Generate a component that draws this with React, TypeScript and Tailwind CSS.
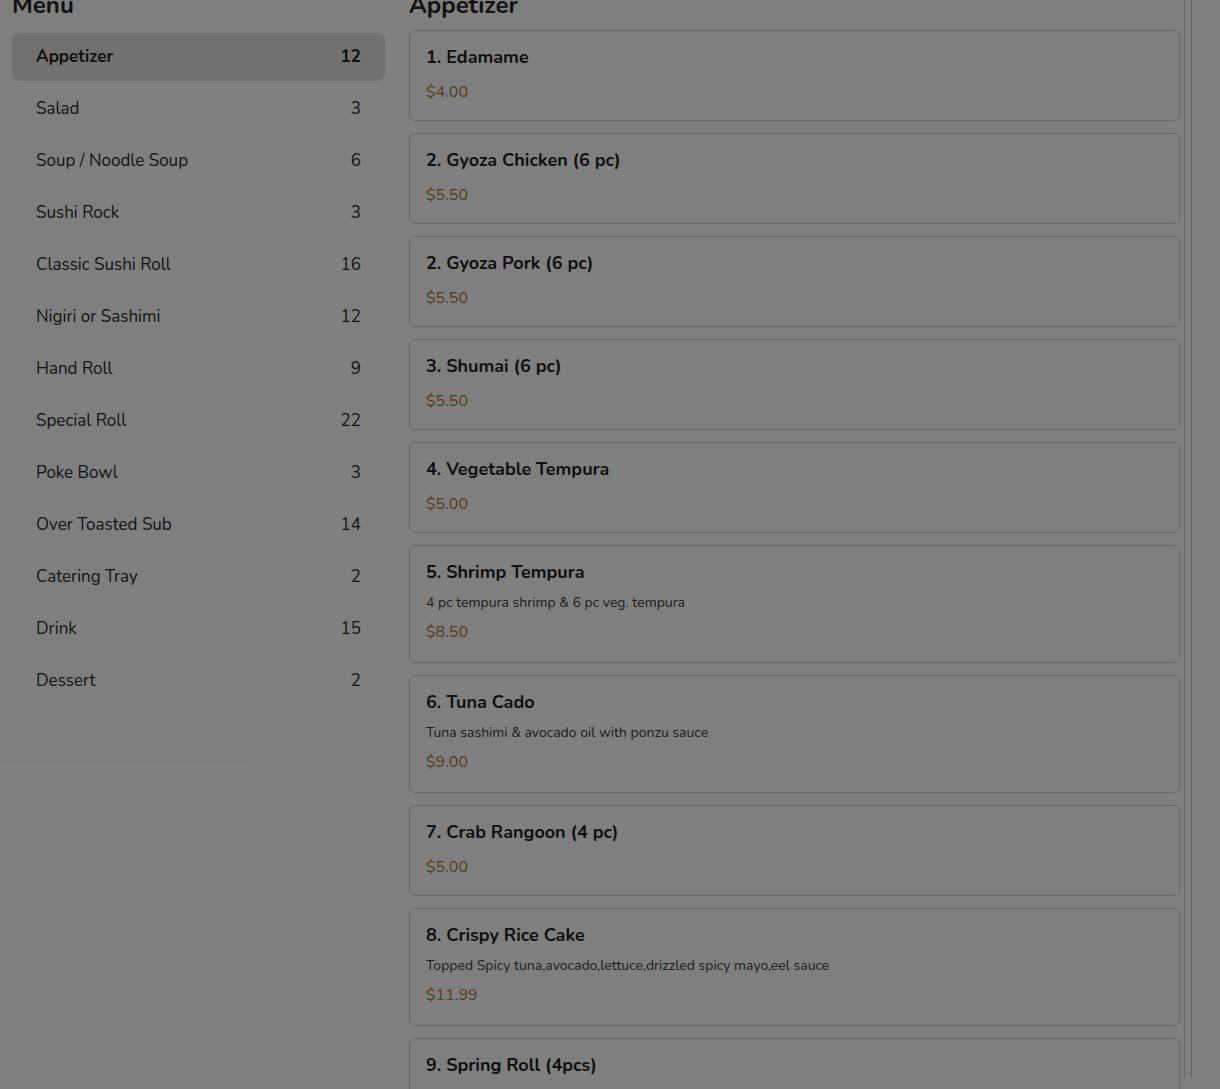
const categories = [
  { name: "Appetizer", count: 12 },
  { name: "Salad", count: 3 },
  { name: "Soup / Noodle Soup", count: 6 },
  { name: "Sushi Rock", count: 3 },
  { name: "Classic Sushi Roll", count: 16 },
  { name: "Nigiri or Sashimi", count: 12 },
  { name: "Hand Roll", count: 9 },
  { name: "Special Roll", count: 22 },
  { name: "Poke Bowl", count: 3 },
  { name: "Over Toasted Sub", count: 14 },
  { name: "Catering Tray", count: 2 },
  { name: "Drink", count: 15 },
  { name: "Dessert", count: 2 },
]

const items = [
  { name: "1. Edamame", price: "$4.00" },
  { name: "2. Gyoza Chicken (6 pc)", price: "$5.50" },
  { name: "2. Gyoza Pork (6 pc)", price: "$5.50" },
  { name: "3. Shumai (6 pc)", price: "$5.50" },
  { name: "4. Vegetable Tempura", price: "$5.00" },
  { name: "5. Shrimp Tempura", desc: "4 pc tempura shrimp & 6 pc veg. tempura", price: "$8.50" },
  { name: "6. Tuna Cado", desc: "Tuna sashimi & avocado oil with ponzu sauce", price: "$9.00" },
  { name: "7. Crab Rangoon (4 pc)", price: "$5.00" },
  { name: "8. Crispy Rice Cake", desc: "Topped Spicy tuna,avocado,lettuce,drizzled spicy mayo,eel sauce", price: "$11.99" },
  { name: "9. Spring Roll (4pcs)", price: "$5.00" },
]

const App = () => {
  return (
    <div className="relative h-[1089px] overflow-hidden bg-white font-['Nunito','Lato',sans-serif] text-[#2a2a2a]">
      <div className="flex w-[1192px] h-full border-r border-[#c4c4c4] pl-3 -mt-[11px]">
        <aside className="w-[373px] shrink-0">
          <h2 className="text-2xl leading-8 font-bold text-[#222] mb-3">Menu</h2>
          <ul className="flex flex-col gap-1">
            {categories.map((c, i) => (
              <li
                key={c.name}
                className={
                  i === 0
                    ? "h-12 px-6 flex items-center justify-between rounded-lg bg-[#e6e3e1] text-[17px] font-bold text-[#222]"
                    : "h-12 px-6 flex items-center justify-between text-[17px] text-[#2a2a2a]"
                }
              >
                <span>{c.name}</span>
                <span>{c.count}</span>
              </li>
            ))}
          </ul>
        </aside>
        <main className="ml-6 w-[776px] shrink-0 pr-1 border-r border-[#d6d6d6]">
          <h2 className="text-2xl leading-8 font-bold text-[#222] mb-[9px]">Appetizer</h2>
          <div className="flex flex-col gap-3">
            {items.map((it) => (
              <div key={it.name} className="border border-[#cfcfcf] rounded-md p-4">
                <h3 className="text-lg leading-5 font-bold text-[#1f1f1f]">{it.name}</h3>
                {it.desc ? (
                  <>
                    <p className="mt-[11px] text-sm leading-5 text-[#3a3a3a]">{it.desc}</p>
                    <p className="mt-[7px] mb-[2px] leading-6 text-[#a87a3d]">{it.price}</p>
                  </>
                ) : (
                  <p className="mt-[13px] leading-6 text-[#a87a3d]">{it.price}</p>
                )}
              </div>
            ))}
          </div>
        </main>
      </div>
      <div className="absolute inset-0 bg-black/50" />
    </div>
  )
}

export default App
